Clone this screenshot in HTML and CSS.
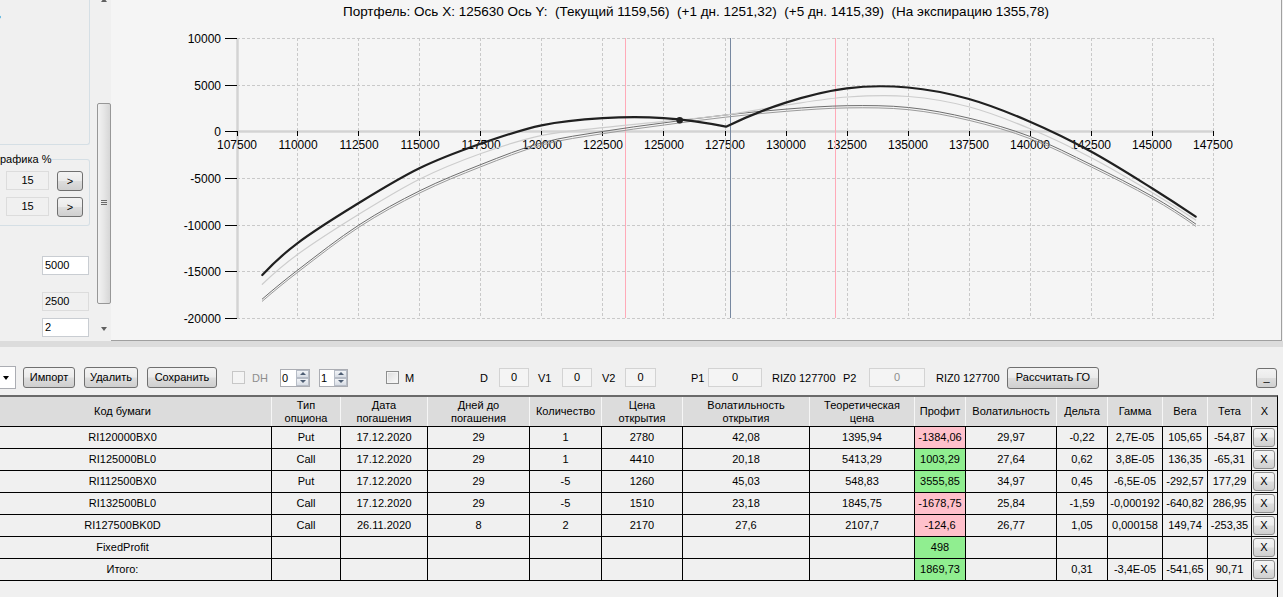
FILE: index.html
```html
<!DOCTYPE html>
<html lang="ru">
<head>
<meta charset="utf-8">
<title>Портфель</title>
<link rel="stylesheet" href="styles.css">
</head>
<body>
<div class="top">
  <div class="side">
    <div class="grp1"><span class="cut">ь</span></div>
    <div class="grp2">
      <div class="grp2-title">рафика %</div>
      <div class="grp-row first"><div class="tb ro small">15</div><div class="btn gt">&gt;</div></div>
      <div class="grp-row"><div class="tb ro small">15</div><div class="btn gt">&gt;</div></div>
    </div>
    <div class="tb field f1">5000</div>
    <div class="tb field ro f2">2500</div>
    <div class="tb field f3">2</div>
  </div>
  <div class="vscroll">
    <div class="sb-up"></div>
    <div class="sb-thumb"><div class="grip"></div><div class="grip"></div><div class="grip"></div></div>
    <div class="sb-down"></div>
  </div>
  <div class="chart">
    <div class="chart-title">Портфель: Ось X: 125630 Ось Y:  (Текущий 1159,56)  (+1 дн. 1251,32)  (+5 дн. 1415,39)  (На экспирацию 1355,78)</div>
    <svg class="plot" width="1170" height="316" viewBox="111 24 1170 316" xmlns="http://www.w3.org/2000/svg">
      <g stroke="#c9c9c9" stroke-width="1" stroke-dasharray="3 2" fill="none">
        <path d="M297.5 38V318M358.5 38V318M419.5 38V318M480.5 38V318M541.5 38V318M602.5 38V318M663.5 38V318M725.5 38V318M786.5 38V318M847.5 38V318M908.5 38V318M969.5 38V318M1030.5 38V318M1091.5 38V318M1152.5 38V318M1213.5 38V318"/>
        <path d="M237 38.5H1214M237 85.5H1214M237 178.5H1214M237 225.5H1214M237 271.5H1214M237 318.5H1214"/>
      </g>
      <g stroke="#d3d3d3" stroke-width="2.5" fill="none">
        <path d="M237.5 38V319"/>
        <path d="M236 131.5H1214"/>
      </g>
      <g stroke="#000" stroke-width="1" fill="none">
        <path d="M225 38.5H237M225 85.5H237M225 131.5H237M225 178.5H237M225 225.5H237M225 271.5H237M225 318.5H237"/>
        <path d="M237.5 131V136M297.5 131V136M358.5 131V136M419.5 131V136M480.5 131V136M541.5 131V136M602.5 131V136M663.5 131V136M725.5 131V136M786.5 131V136M847.5 131V136M908.5 131V136M969.5 131V136M1030.5 131V136M1091.5 131V136M1152.5 131V136M1213.5 131V136"/>
      </g>
      <g class="ylab" text-anchor="end">
        <text x="221" y="43">10000</text>
        <text x="221" y="90">5000</text>
        <text x="221" y="136">0</text>
        <text x="221" y="183">-5000</text>
        <text x="221" y="230">-10000</text>
        <text x="221" y="276">-15000</text>
        <text x="221" y="323">-20000</text>
      </g>
      <g class="xlab" text-anchor="middle">
        <text x="237" y="149">107500</text>
        <text x="298" y="149">110000</text>
        <text x="359" y="149">112500</text>
        <text x="420" y="149">115000</text>
        <text x="481" y="149">117500</text>
        <text x="542" y="149">120000</text>
        <text x="603" y="149">122500</text>
        <text x="664" y="149">125000</text>
        <text x="725" y="149">127500</text>
        <text x="786" y="149">130000</text>
        <text x="847" y="149">132500</text>
        <text x="908" y="149">135000</text>
        <text x="969" y="149">137500</text>
        <text x="1030" y="149">140000</text>
        <text x="1091" y="149">142500</text>
        <text x="1152" y="149">145000</text>
        <text x="1213" y="149">147500</text>
      </g>
      <path d="M625.5 38V318M835.5 38V318" stroke="#ffaab8" stroke-width="1"/>
      <path d="M730.5 38V318" stroke="#7788a0" stroke-width="1"/>
      <g fill="none" stroke-linecap="round" stroke-linejoin="round">
        <path stroke="#9a9a9a" stroke-width="1" transform="translate(0 2.2)" d="M262.3,299 C274.13,288.73 285.97,279.06 297.8,270 C318.16,254.4 338.54,238.22 358.9,225 C379.26,211.78 399.54,200.78 419.9,190.7 C440.26,180.62 460.64,172.5 481,164.5 C501.36,156.5 521.74,148.22 542.1,142.7 C562.46,137.18 582.84,134.72 603.2,131.4 C623.56,128.08 643.84,125.53 664.2,122.8 C684.56,120.07 704.94,117.28 725.3,115 C745.66,112.72 766.04,110.65 786.4,109.1 C806.76,107.55 827.14,105.97 847.5,105.7 C867.86,105.43 888.24,105.4 908.6,107.5 C928.96,109.6 949.34,113.43 969.7,118.3 C990.06,123.17 1010.34,128.92 1030.7,136.7 C1051.06,144.48 1071.44,155 1091.8,165 C1112.16,175 1132.54,185.14 1152.9,196.7 C1167.17,204.8 1181.43,213.9 1195.7,224"/>
        <path stroke="#6e6e6e" stroke-width="1" d="M262.3,299 C274.13,288.73 285.97,279.06 297.8,270 C318.16,254.4 338.54,238.22 358.9,225 C379.26,211.78 399.54,200.78 419.9,190.7 C440.26,180.62 460.64,172.5 481,164.5 C501.36,156.5 521.74,148.22 542.1,142.7 C562.46,137.18 582.84,134.72 603.2,131.4 C623.56,128.08 643.84,125.53 664.2,122.8 C684.56,120.07 704.94,117.28 725.3,115 C745.66,112.72 766.04,110.65 786.4,109.1 C806.76,107.55 827.14,105.97 847.5,105.7 C867.86,105.43 888.24,105.4 908.6,107.5 C928.96,109.6 949.34,113.43 969.7,118.3 C990.06,123.17 1010.34,128.92 1030.7,136.7 C1051.06,144.48 1071.44,155 1091.8,165 C1112.16,175 1132.54,185.14 1152.9,196.7 C1167.17,204.8 1181.43,213.9 1195.7,224"/>
        <path stroke="#cdcdcd" stroke-width="1.2" d="M262.3,284.3 C274.13,272.88 285.97,262.88 297.8,254.3 C318.16,239.54 338.54,226.85 358.9,214.3 C379.26,201.75 399.54,189.13 419.9,179 C440.26,168.87 460.64,160.78 481,153.5 C501.36,146.22 521.74,139.62 542.1,135.3 C562.46,130.98 582.84,129.92 603.2,127.6 C623.56,125.28 643.84,123.5 664.2,121.4 C684.56,119.3 704.94,117.73 725.3,115 C745.66,112.27 766.04,108 786.4,105 C806.76,102 827.14,98.42 847.5,97 C867.86,95.58 888.24,94.83 908.6,96.5 C928.96,98.17 949.34,101.58 969.7,107 C990.06,112.42 1010.34,120.5 1030.7,129 C1051.06,137.5 1071.44,147.33 1091.8,158 C1112.16,168.67 1132.54,180.85 1152.9,193 C1167.17,201.52 1181.43,210.51 1195.7,220"/>
        <path stroke="#202020" stroke-width="2.2" d="M262.3,275 C273.97,262.56 285.63,252.01 297.3,243.3 C317.67,228.11 338.03,215.81 358.4,203.3 C378.73,190.82 399.07,178.2 419.4,168.3 C439.77,158.38 460.13,150.97 480.5,143.8 C500.83,136.64 521.17,129.57 541.5,125.3 C561.87,121.02 582.23,119.3 602.6,118.1 C622.97,116.9 643.33,116.67 663.7,118.1 C684.47,119.55 705.23,122.42 726,126.7 C745.93,116.97 765.87,108.94 785.8,102.6 C806.13,96.13 826.47,90.82 846.8,88.3 C867.17,85.77 887.53,85.71 907.9,87.5 C928.27,89.29 948.63,93.3 969,99 C989.33,104.69 1009.67,112.96 1030,121.7 C1050.33,130.44 1070.67,140.42 1091,151.5 C1111.33,162.58 1131.67,175.53 1152,188.2 C1166.57,197.28 1181.13,206.78 1195.7,216.7"/>
      </g>
      <circle cx="679.7" cy="120.2" r="3.3" fill="#222"/>
    </svg>
  </div>
</div>
<div class="splitter"></div>
<div class="toolbar">
  <div class="combo"><span class="caret"></span></div>
  <div class="btn b-imp">Импорт</div>
  <div class="btn b-del">Удалить</div>
  <div class="btn b-save">Сохранить</div>
  <div class="chk dis c-dh"></div>
  <div class="lbl dis-t l-dh">DH</div>
  <div class="spin s0"><span class="spin-val">0</span><span class="spin-btns"><span class="sp up"></span><span class="sp dn"></span></span></div>
  <div class="spin s1"><span class="spin-val">1</span><span class="spin-btns"><span class="sp up"></span><span class="sp dn"></span></span></div>
  <div class="chk c-m"></div>
  <div class="lbl l-m">M</div>
  <div class="lbl l-d">D</div>
  <div class="tb ctr box b-d">0</div>
  <div class="lbl l-v1">V1</div>
  <div class="tb ctr box b-v1">0</div>
  <div class="lbl l-v2">V2</div>
  <div class="tb ctr box b-v2">0</div>
  <div class="lbl l-p1">P1</div>
  <div class="tb ctr box b-p1">0</div>
  <div class="lbl l-riz1">RIZ0 127700</div>
  <div class="lbl l-p2">P2</div>
  <div class="tb ctr box dis-t b-p2">0</div>
  <div class="lbl l-riz2">RIZ0 127700</div>
  <div class="btn b-go">Рассчитать ГО</div>
  <div class="btn b-min">_</div>
</div>
<div class="grid">
  <div class="row head">
    <div class="c">Код бумаги</div>
    <div class="c">Тип<br>опциона</div>
    <div class="c">Дата<br>погашения</div>
    <div class="c">Дней до<br>погашения</div>
    <div class="c">Количество</div>
    <div class="c">Цена<br>открытия</div>
    <div class="c">Волатильность<br>открытия</div>
    <div class="c">Теоретическая<br>цена</div>
    <div class="c">Профит</div>
    <div class="c">Волатильность</div>
    <div class="c">Дельта</div>
    <div class="c">Гамма</div>
    <div class="c">Вега</div>
    <div class="c">Тета</div>
    <div class="c">X</div>
  </div>
  <div class="row">
    <div class="c">RI120000BX0</div><div class="c">Put</div><div class="c">17.12.2020</div><div class="c">29</div><div class="c">1</div><div class="c">2780</div><div class="c">42,08</div><div class="c">1395,94</div><div class="c neg">-1384,06</div><div class="c">29,97</div><div class="c">-0,22</div><div class="c">2,7E-05</div><div class="c">105,65</div><div class="c">-54,87</div><div class="c"><div class="xbtn">X</div></div>
  </div>
  <div class="row">
    <div class="c">RI125000BL0</div><div class="c">Call</div><div class="c">17.12.2020</div><div class="c">29</div><div class="c">1</div><div class="c">4410</div><div class="c">20,18</div><div class="c">5413,29</div><div class="c pos">1003,29</div><div class="c">27,64</div><div class="c">0,62</div><div class="c">3,8E-05</div><div class="c">136,35</div><div class="c">-65,31</div><div class="c"><div class="xbtn">X</div></div>
  </div>
  <div class="row">
    <div class="c">RI112500BX0</div><div class="c">Put</div><div class="c">17.12.2020</div><div class="c">29</div><div class="c">-5</div><div class="c">1260</div><div class="c">45,03</div><div class="c">548,83</div><div class="c pos">3555,85</div><div class="c">34,97</div><div class="c">0,45</div><div class="c">-6,5E-05</div><div class="c">-292,57</div><div class="c">177,29</div><div class="c"><div class="xbtn">X</div></div>
  </div>
  <div class="row">
    <div class="c">RI132500BL0</div><div class="c">Call</div><div class="c">17.12.2020</div><div class="c">29</div><div class="c">-5</div><div class="c">1510</div><div class="c">23,18</div><div class="c">1845,75</div><div class="c neg">-1678,75</div><div class="c">25,84</div><div class="c">-1,59</div><div class="c">-0,000192</div><div class="c">-640,82</div><div class="c">286,95</div><div class="c"><div class="xbtn">X</div></div>
  </div>
  <div class="row">
    <div class="c">RI127500BK0D</div><div class="c">Call</div><div class="c">26.11.2020</div><div class="c">8</div><div class="c">2</div><div class="c">2170</div><div class="c">27,6</div><div class="c">2107,7</div><div class="c neg">-124,6</div><div class="c">26,77</div><div class="c">1,05</div><div class="c">0,000158</div><div class="c">149,74</div><div class="c">-253,35</div><div class="c"><div class="xbtn">X</div></div>
  </div>
  <div class="row">
    <div class="c">FixedProfit</div><div class="c"></div><div class="c"></div><div class="c"></div><div class="c"></div><div class="c"></div><div class="c"></div><div class="c"></div><div class="c pos">498</div><div class="c"></div><div class="c"></div><div class="c"></div><div class="c"></div><div class="c"></div><div class="c"><div class="xbtn">X</div></div>
  </div>
  <div class="row">
    <div class="c">Итого:</div><div class="c"></div><div class="c"></div><div class="c"></div><div class="c"></div><div class="c"></div><div class="c"></div><div class="c"></div><div class="c pos">1869,73</div><div class="c"></div><div class="c">0,31</div><div class="c">-3,4E-05</div><div class="c">-541,65</div><div class="c">90,71</div><div class="c"><div class="xbtn">X</div></div>
  </div>
</div>
</body>
</html>
```

FILE: styles.css
```css
* { box-sizing: border-box; }
html, body { margin: 0; padding: 0; }
body {
  width: 1283px;
  height: 597px;
  overflow: hidden;
  background: #f0f0f0;
  font-family: "Liberation Sans", Arial, sans-serif;
  font-size: 11px;
  color: #000;
}

/* ---------- top area ---------- */
.top { display: flex; height: 341px; }

.side {
  width: 96px;
  flex: none;
  overflow: hidden;
  display: flex;
  flex-direction: column;
}
.grp1 {
  width: 90px;
  height: 145px;
  flex: none;
  border-right: 1px solid #d5dfe5;
  border-bottom: 1px solid #d5dfe5;
  border-bottom-right-radius: 3px;
  padding-top: 9px;
}
.cut { display: block; margin-left: -5px; line-height: 13px; }
.grp2 {
  width: 90px;
  height: 67px;
  flex: none;
  margin-top: 14px;
  border: 1px solid #d5dfe5;
  border-left: none;
  border-radius: 0 3px 3px 0;
  display: flex;
  flex-direction: column;
}
.grp2-title {
  margin-top: -7px;
  width: 52px;
  line-height: 13px;
  background: #f0f0f0;
  white-space: nowrap;
}
.grp-row { display: flex; align-items: center; height: 21px; margin-top: 5px; }
.grp-row.first { margin-top: 4px; }

.tb {
  height: 19px;
  border: 1px solid #c9cdd2;
  background: #fff;
  line-height: 17px;
  padding: 0 2px;
  white-space: nowrap;
}
.tb.ro { background: #f0f0f0; border-color: #dcdcdc; }
.tb.small { width: 43px; margin-left: 6px; text-align: center; }
.tb.field { width: 47px; margin-left: 42px; flex: none; }
.f1 { margin-top: 30px; }
.f2 { margin-top: 17px; }
.f3 { margin-top: 7px; }

.btn {
  height: 21px;
  border: 1px solid #707070;
  border-radius: 3px;
  background: linear-gradient(#f3f3f3 0%, #ebebeb 48%, #dddddd 52%, #cfcfcf 100%);
  text-align: center;
  line-height: 19px;
  white-space: nowrap;
  flex: none;
}
.btn.gt { width: 26px; height: 20px; margin-left: 8px; line-height: 18px; }

.vscroll {
  width: 15px;
  flex: none;
  display: flex;
  flex-direction: column;
  align-items: center;
}
.sb-up {
  margin-top: -2px;
  width: 0; height: 0;
  border-left: 3.5px solid transparent;
  border-right: 3.5px solid transparent;
  border-bottom: 4px solid #606060;
}
.sb-thumb {
  margin-top: 101px;
  width: 14px;
  height: 201px;
  border: 1px solid #979797;
  border-radius: 2px;
  background: linear-gradient(90deg, #f2f2f2 0%, #e6e6e6 50%, #d6d6d6 100%);
  display: flex;
  flex-direction: column;
  align-items: center;
  padding-top: 96px;
  gap: 1px;
}
.grip { width: 6px; height: 1px; background: #6a6a6a; }
.sb-down {
  margin-top: 23px;
  width: 0; height: 0;
  border-left: 3.5px solid transparent;
  border-right: 3.5px solid transparent;
  border-top: 4px solid #606060;
}

.chart {
  width: 1171px;
  flex: none;
  height: 341px;
  background: #f5f5f5;
  border-right: 1px solid #a0a0a0;
  border-bottom: 1px solid #a0a0a0;
  display: flex;
  flex-direction: column;
}
.chart-title {
  height: 24px;
  line-height: 23px;
  text-align: center;
  font-size: 13.5px;
  white-space: pre;
  color: #000;
}
.plot { display: block; }
.ylab text, .xlab text {
  font-family: "Liberation Sans", Arial, sans-serif;
  font-size: 12px;
  fill: #000;
}

/* ---------- splitter + toolbar ---------- */
.splitter { height: 6px; background: #dcdcdc; }

.toolbar {
  height: 48px;
  padding-top: 13px;
  display: flex;
  align-items: center;
}
.combo {
  width: 17px;
  height: 23px;
  margin-left: -1px;
  background: #fff;
  border: 1px solid #abadb3;
  border-left: none;
  flex: none;
  display: flex;
  align-items: center;
  justify-content: center;
}
.caret {
  width: 0; height: 0;
  margin-left: -2px;
  border-left: 3.5px solid transparent;
  border-right: 3.5px solid transparent;
  border-top: 4px solid #000;
}
.b-imp { width: 52px; margin-left: 7px; }
.b-del { width: 54px; margin-left: 9px; }
.b-save { width: 70px; margin-left: 9px; }

.chk {
  width: 13px; height: 13px;
  flex: none;
  border: 1px solid #8e8f8f;
  background: linear-gradient(135deg, #dcdcdc, #fbfbfb);
  box-shadow: inset 0 0 0 1px #f4f4f4;
}
.chk.dis { border-color: #c7c7c7; background: #f4f4f4; }
.c-dh { margin-left: 15px; }
.c-m { margin-left: 38px; }

.lbl { flex: none; white-space: nowrap; }
.dis-t { color: #8d8d8d; }
.l-dh { margin-left: 7px; width: 16px; }
.l-m { margin-left: 6px; width: 9px; }
.l-d { margin-left: 66px; width: 8px; }
.l-v1 { margin-left: 9px; width: 13px; }
.l-v2 { margin-left: 10px; width: 13px; }
.l-p1 { margin-left: 35px; width: 13px; }
.l-riz1 { margin-left: 10px; width: 62px; }
.l-p2 { margin-left: 9px; width: 13px; }
.l-riz2 { margin-left: 11px; width: 62px; }

.spin {
  height: 18px;
  flex: none;
  display: flex;
  border: 1px solid #abadb3;
  background: #fff;
}
.s0 { width: 30px; margin-left: 12px; }
.s1 { width: 29px; margin-left: 9px; }
.spin-val { flex: 1; line-height: 16px; padding-left: 1px; }
.spin-btns { width: 13px; display: flex; flex-direction: column; }
.sp {
  flex: 1;
  border: 1px solid #b6bcc6;
  background: linear-gradient(#f2f4f7, #d8dde5);
  display: flex;
  align-items: center;
  justify-content: center;
}
.sp.up::after {
  content: "";
  border-left: 3px solid transparent;
  border-right: 3px solid transparent;
  border-bottom: 3px solid #4d5d73;
}
.sp.dn::after {
  content: "";
  border-left: 3px solid transparent;
  border-right: 3px solid transparent;
  border-top: 3px solid #4d5d73;
}

.box {
  flex: none;
  background: #f4f4f4;
  border-color: #d3d3d3;
}
.ctr { text-align: center; }
.b-d { width: 30px; margin-left: 11px; }
.b-v1 { width: 30px; margin-left: 11px; }
.b-v2 { width: 31px; margin-left: 10px; }
.b-p1 { width: 54px; margin-left: 4px; }
.b-p2 { width: 56px; margin-left: 13px; }
.b-go { width: 92px; margin-left: 9px; height: 22px; }
.b-min { width: 21px; margin-left: 157px; height: 20px; line-height: 16px; }

/* ---------- grid ---------- */
.grid {
  margin-left: -26px;
  width: 1304px;
  height: 202px;
  border-top: 2px solid #6a6a6a;
  border-right: 1px solid #000;
}
.row {
  display: grid;
  grid-template-columns: 298px 69px 87px 102px 72px 81px 127px 105px 51px 91px 51px 55px 45px 44px 25px;
  height: 22px;
  border-bottom: 1px solid #000;
}
.row .c {
  border-right: 1px solid #000;
  text-align: center;
  line-height: 21px;
  white-space: nowrap;
  overflow: hidden;
}
.row .c:last-child { border-right: none; }
.row.head { height: 30px; background: #dcdcdc; }
.row.head .c {
  border-right: 1px solid #f6f6f6;
  line-height: 13px;
  display: flex;
  align-items: center;
  justify-content: center;
}
.row.head .c:last-child { border-right: none; }
.c.neg { background: #ffc0cb; }
.c.pos { background: #90ee90; }
.xbtn {
  margin: 1px 2px 1px 1px;
  height: 19px;
  border: 1px solid #8c8c8c;
  border-radius: 3px;
  background: linear-gradient(#f4f4f4 0%, #ececec 48%, #dedede 52%, #cfcfcf 100%);
  line-height: 17px;
  text-align: center;
}
```
